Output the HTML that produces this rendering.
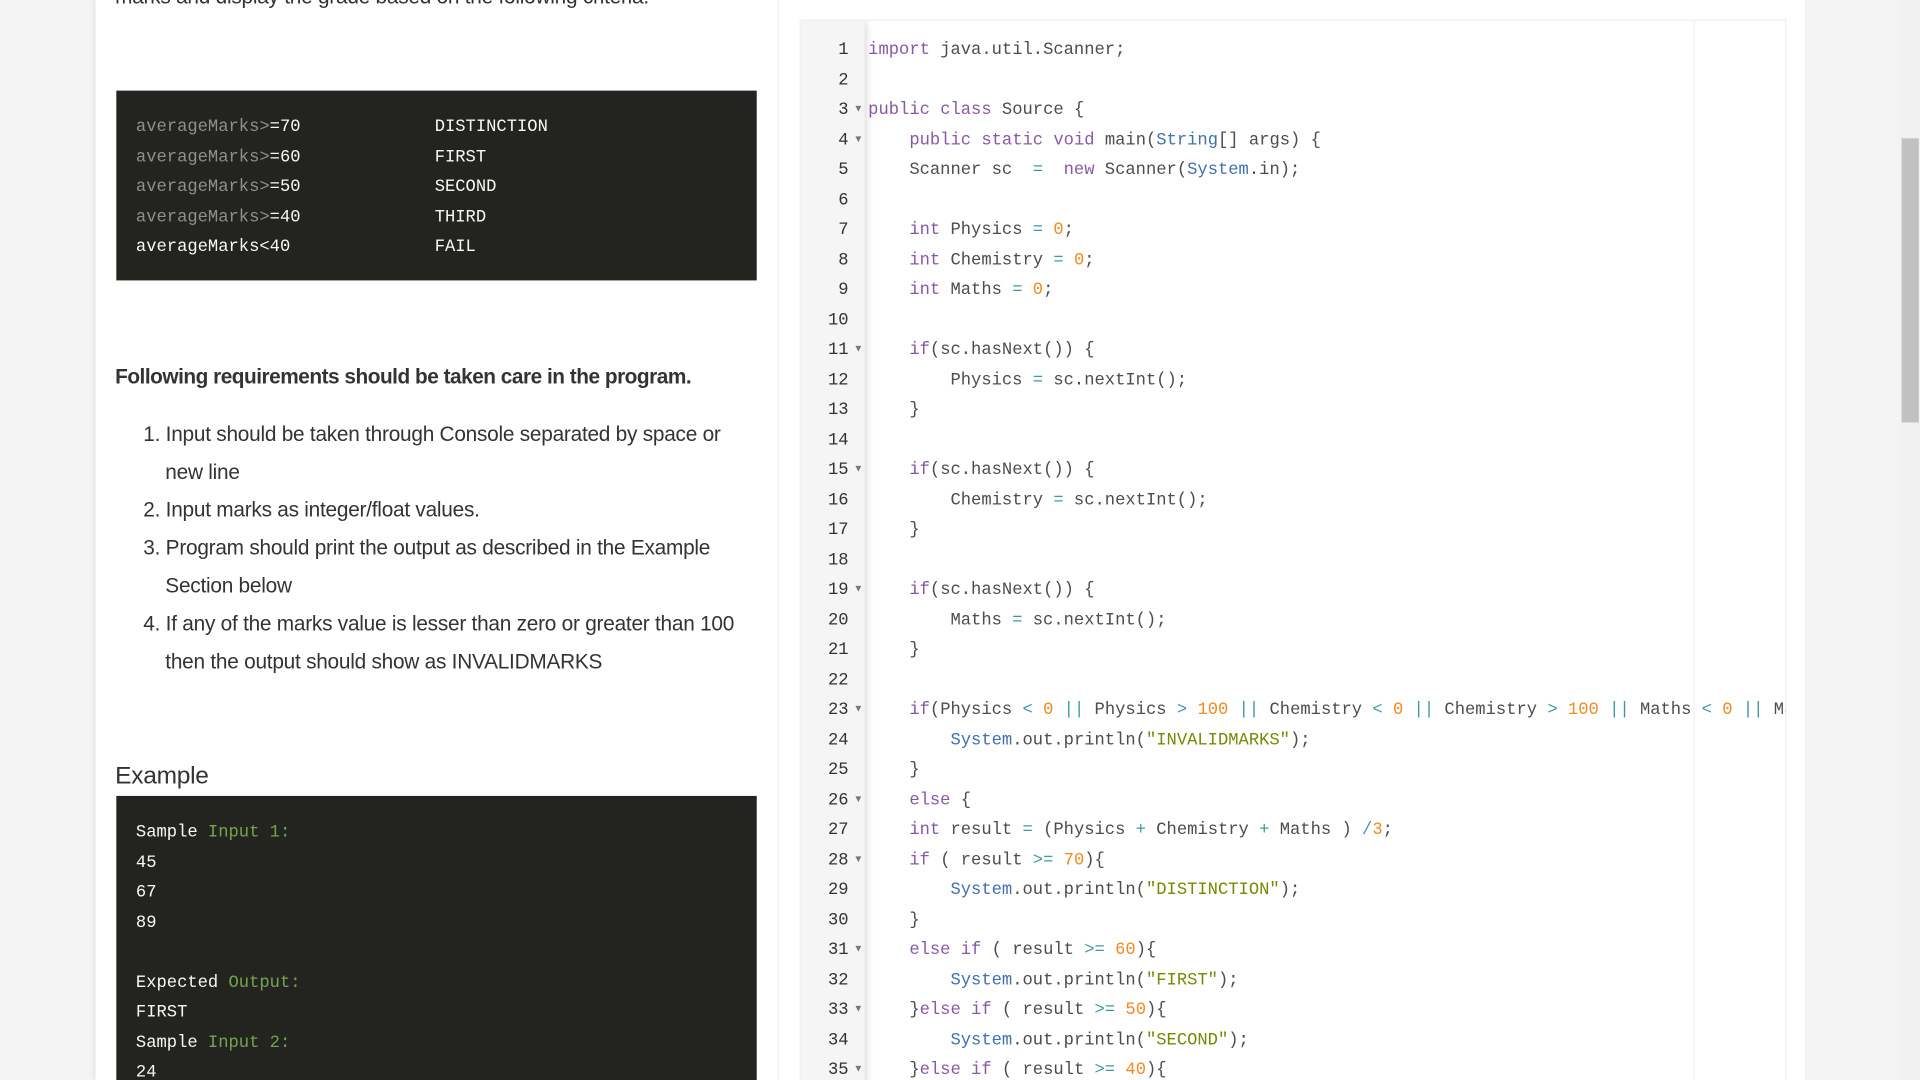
<!DOCTYPE html>
<html><head><meta charset="utf-8"><style>
html,body{margin:0;padding:0;width:1920px;height:1080px;overflow:hidden;background:#f4f4f4}
#w{position:absolute;left:0;top:0;width:1568px;height:882px;overflow:hidden;transform:scale(1.22449);transform-origin:0 0;background:#f4f4f4;font-family:"Liberation Sans",sans-serif}
.card{position:absolute;left:78px;top:0;width:1396px;height:882px;background:#fff;box-shadow:-2px 0 3px rgba(0,0,0,.06)}
.div{position:absolute;left:635px;top:0;width:1px;height:882px;background:#eee}
.dark{position:absolute;background:#23241f;font-family:"Liberation Mono",monospace;font-size:14px;color:#f8f8f2}
.dl{position:absolute;white-space:pre;line-height:24.5px}
.t{position:absolute;white-space:nowrap;color:#333;font-size:17px;letter-spacing:-0.2px}
.ed{position:absolute;left:653px;top:16px;width:804px;height:880px;border:1px solid #eee;background:#fff;overflow:hidden}
.gut{position:absolute;left:0;top:0;width:52px;height:100%;background:#f5f5f5;box-shadow:2px 0 6px rgba(0,0,0,.15)}
.ln{position:absolute;left:0;width:39px;text-align:right;font-family:"Liberation Mono",monospace;font-size:14px;color:#333}
.fd{position:absolute;left:43px;font-size:8px;color:#777}
.code{position:absolute;left:55px;top:12px;font-family:"Liberation Mono",monospace;font-size:14px;line-height:24.5px;color:#4d4d4c;white-space:pre}
.k{color:#8959a8}.b{color:#4271ae}.o{color:#3e999f}.n{color:#f5871f}.s{color:#718c00}
.pm{position:absolute;left:729px;top:0;width:1px;height:100%;background:#f0f0f0}
.sb{position:absolute;left:1551px;top:0;width:17px;height:882px;background:#f1f1f1}
.th{position:absolute;left:1553px;top:113px;width:14px;height:232px;background:#c1c1c1}
</style></head><body><div id="w">
<div class="card"></div><div class="div"></div>
<div class="t" style="left:94px;top:-12px">marks and display the grade based on the following criteria.</div>
<div class="dark" style="left:95px;top:74px;width:523px;height:155px">
<div class="dl" style="left:16px;top:18px;color:#8f908a">averageMarks&gt;<span style="color:#f8f8f2">=70</span>
averageMarks&gt;<span style="color:#f8f8f2">=60</span>
averageMarks&gt;<span style="color:#f8f8f2">=50</span>
averageMarks&gt;<span style="color:#f8f8f2">=40</span>
<span style="color:#f8f8f2">averageMarks&lt;40</span></div>
<div class="dl" style="left:260px;top:18px">DISTINCTION
FIRST
SECOND
THIRD
FAIL</div></div>
<div class="t" style="left:94px;top:298px;font-weight:bold;font-size:17px;letter-spacing:-0.4px">Following requirements should be taken care in the program.</div>
<div class="t" style="left:117px;top:345px">1. Input should be taken through Console separated by space or</div>
<div class="t" style="left:135px;top:376px">new line</div>
<div class="t" style="left:117px;top:407px">2. Input marks as integer/float values.</div>
<div class="t" style="left:117px;top:438px">3. Program should print the output as described in the Example</div>
<div class="t" style="left:135px;top:469px">Section below</div>
<div class="t" style="left:117px;top:500px">4. If any of the marks value is lesser than zero or greater than 100</div>
<div class="t" style="left:135px;top:531px">then the output should show as INVALIDMARKS</div>
<div class="t" style="left:94px;top:623px;font-size:20px;font-weight:500">Example</div>
<div class="dark" style="left:95px;top:650px;width:523px;height:240px">
<div class="dl" style="left:16px;top:18px">Sample <span style="color:#75a34f">Input 1:</span>
45
67
89

Expected <span style="color:#75a34f">Output:</span>
FIRST
Sample <span style="color:#75a34f">Input 2:</span>
24</div></div>
<div class="ed"><div class="pm"></div><div class="gut" id="g"></div>
<div class="code"><span class="k">import</span> java.util.Scanner;

<span class="k">public</span> <span class="k">class</span> Source {
    <span class="k">public</span> <span class="k">static</span> <span class="k">void</span> main(<span class="b">String</span>[] args) {
    Scanner sc  <span class="o">=</span>  <span class="k">new</span> Scanner(<span class="b">System</span>.in);

    <span class="k">int</span> Physics <span class="o">=</span> <span class="n">0</span>;
    <span class="k">int</span> Chemistry <span class="o">=</span> <span class="n">0</span>;
    <span class="k">int</span> Maths <span class="o">=</span> <span class="n">0</span>;

    <span class="k">if</span>(sc.hasNext()) {
        Physics <span class="o">=</span> sc.nextInt();
    }

    <span class="k">if</span>(sc.hasNext()) {
        Chemistry <span class="o">=</span> sc.nextInt();
    }

    <span class="k">if</span>(sc.hasNext()) {
        Maths <span class="o">=</span> sc.nextInt();
    }

    <span class="k">if</span>(Physics <span class="o">&lt;</span> <span class="n">0</span> <span class="o">||</span> Physics <span class="o">&gt;</span> <span class="n">100</span> <span class="o">||</span> Chemistry <span class="o">&lt;</span> <span class="n">0</span> <span class="o">||</span> Chemistry <span class="o">&gt;</span> <span class="n">100</span> <span class="o">||</span> Maths <span class="o">&lt;</span> <span class="n">0</span> <span class="o">||</span> Maths <span class="o">&gt;</span> <span class="n">100</span>)
        <span class="b">System</span>.out.println(<span class="s">"INVALIDMARKS"</span>);
    }
    <span class="k">else</span> {
    <span class="k">int</span> result <span class="o">=</span> (Physics <span class="o">+</span> Chemistry <span class="o">+</span> Maths ) <span class="o">/</span><span class="n">3</span>;
    <span class="k">if</span> ( result <span class="o">&gt;=</span> <span class="n">70</span>){
        <span class="b">System</span>.out.println(<span class="s">"DISTINCTION"</span>);
    }
    <span class="k">else</span> <span class="k">if</span> ( result <span class="o">&gt;=</span> <span class="n">60</span>){
        <span class="b">System</span>.out.println(<span class="s">"FIRST"</span>);
    }<span class="k">else</span> <span class="k">if</span> ( result <span class="o">&gt;=</span> <span class="n">50</span>){
        <span class="b">System</span>.out.println(<span class="s">"SECOND"</span>);
    }<span class="k">else</span> <span class="k">if</span> ( result <span class="o">&gt;=</span> <span class="n">40</span>){</div>
<div style="position:absolute;left:0;top:0" id="nums">
<div class="ln" style="top:12px;line-height:24.5px;white-space:pre">1
2
3
4
5
6
7
8
9
10
11
12
13
14
15
16
17
18
19
20
21
22
23
24
25
26
27
28
29
30
31
32
33
34
35</div>
<div class="fd" style="top:67px">▼</div><div class="fd" style="top:92px">▼</div>
<div class="fd" style="top:263px">▼</div><div class="fd" style="top:361px">▼</div>
<div class="fd" style="top:459px">▼</div><div class="fd" style="top:557px">▼</div>
<div class="fd" style="top:631px">▼</div><div class="fd" style="top:680px">▼</div>
<div class="fd" style="top:753px">▼</div><div class="fd" style="top:802px">▼</div>
<div class="fd" style="top:851px">▼</div>
</div></div>
<div class="sb"></div><div class="th"></div>
</div></body></html>
